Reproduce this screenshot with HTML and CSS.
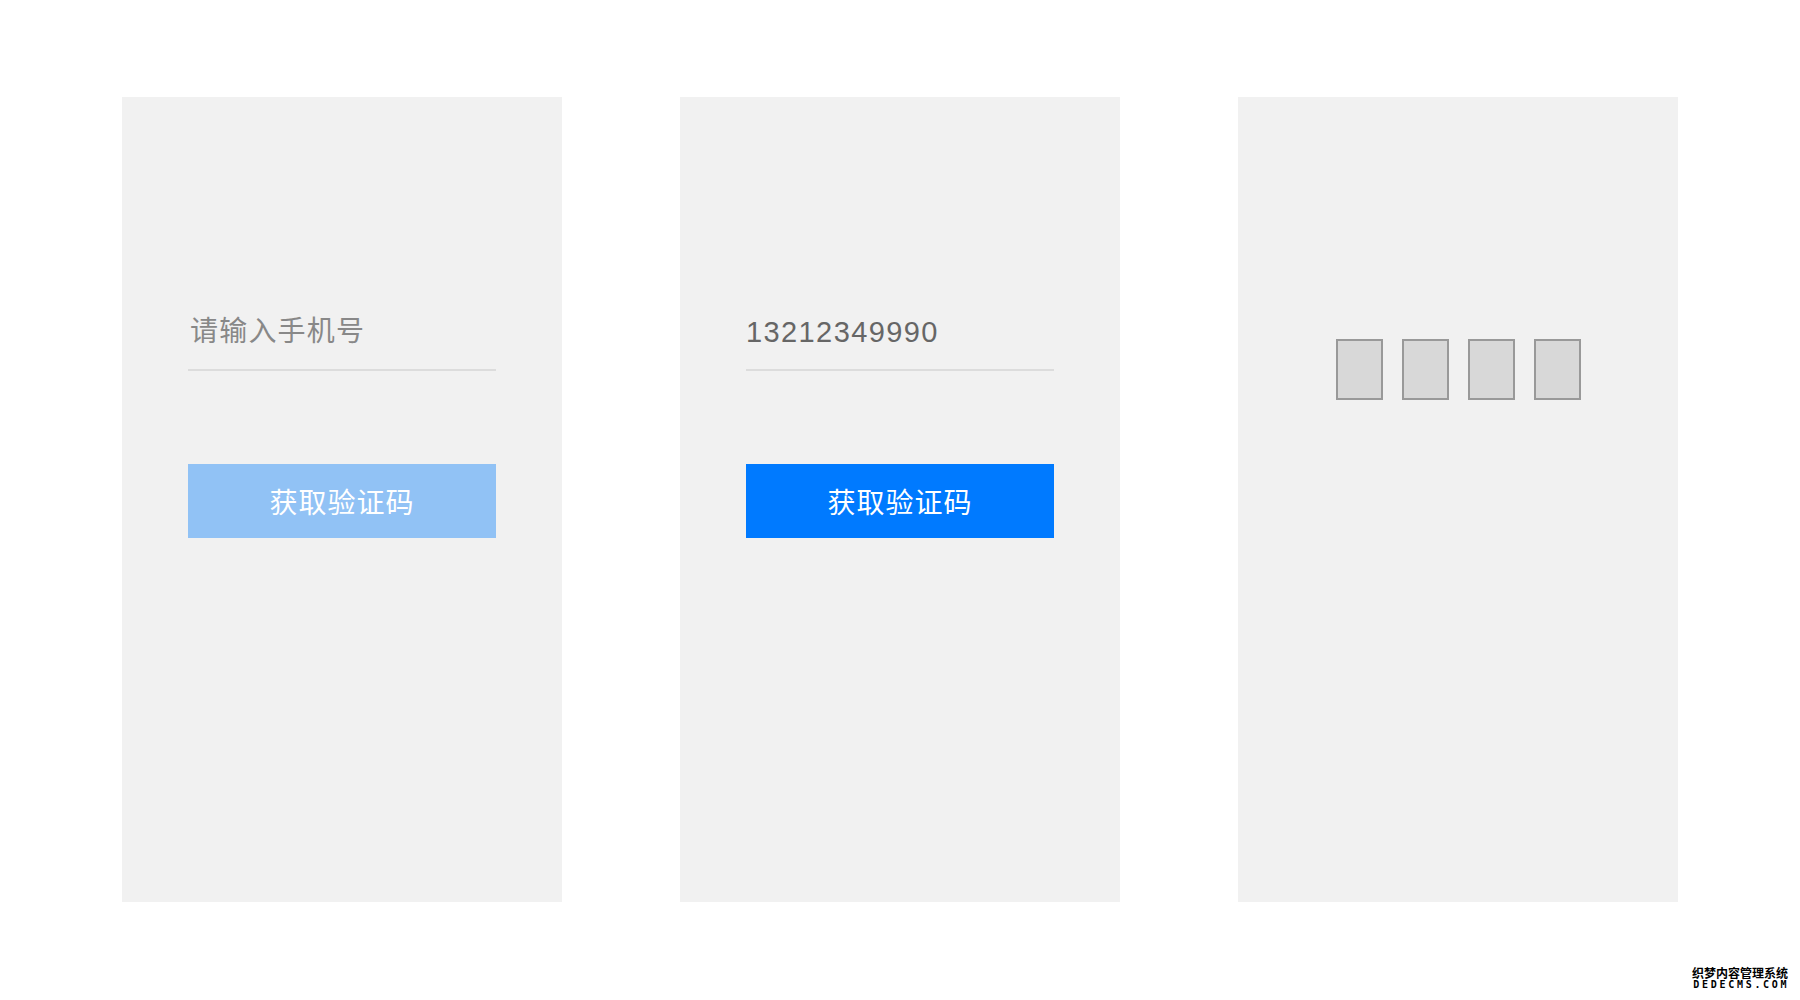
FILE: index.html
```html
<!DOCTYPE html>
<html lang="zh-CN">
<head>
    <meta charset="UTF-8">
    <meta name="viewport" content="width=device-width, initial-scale=1.0">
    <title>获取验证码</title>
    <link rel="stylesheet" href="styles.css">
</head>
<body>

    <div class="screens">
        <!-- step 1: empty phone number -->
        <div class="screen">
            <div class="field">
                <span class="placeholder">请输入手机号</span>
            </div>
            <button class="code-btn disabled" type="button">获取验证码</button>
        </div>

        <!-- step 2: number filled in -->
        <div class="screen">
            <div class="field">
                <span class="value">13212349990</span>
            </div>
            <button class="code-btn" type="button">获取验证码</button>
        </div>

        <!-- step 3: code boxes -->
        <div class="screen">
            <div class="code-boxes">
                <span class="code-box"></span>
                <span class="code-box"></span>
                <span class="code-box"></span>
                <span class="code-box"></span>
            </div>
        </div>
    </div>

    <div class="watermark">
        <div class="wm-cn">织梦内容管理系统</div>
        <div class="wm-en">DEDECMS.COM</div>
    </div>

</body>
</html>
```

FILE: styles.css
```css
body {
    margin: 0;
    background-color: #fff;
    font-family: 'Liberation Sans', 'Noto Sans CJK SC', sans-serif;
    height: 1000px;
    overflow: hidden;
}

.screens {
    display: flex;
    justify-content: center;
    gap: 118px;
    padding-top: 97px;
}

.screen {
    width: 440px;
    height: 805px;
    background-color: #f1f1f1;
    box-sizing: border-box;
    padding: 216px 66px 0;
}

.field {
    height: 38px;
    padding-bottom: 18px;
    border-bottom: 2px solid #dcdcdc;
    line-height: 38px;
}

.placeholder {
    font-size: 28px;
    letter-spacing: 1.2px;
    color: #888;
    padding-left: 2px;
}

.value {
    font-size: 29px;
    letter-spacing: 1.4px;
    color: #666;
}

.code-btn {
    display: block;
    width: 100%;
    height: 74px;
    margin-top: 93px;
    border: none;
    background-color: #007aff;
    color: #fff;
    font-family: 'Noto Sans CJK SC', sans-serif;
    font-size: 28px;
    letter-spacing: 1px;
    padding: 0;
}

.code-btn.disabled {
    background-color: #91c2f5;
}

.code-boxes {
    display: flex;
    justify-content: center;
    gap: 19px;
    margin-top: 26px;
}

.code-box {
    width: 47px;
    height: 61px;
    box-sizing: border-box;
    border: 2px solid #999;
    background-color: #d8d8d8;
}

.watermark {
    position: absolute;
    right: 12px;
    top: 966px;
    font-family: 'Noto Sans CJK SC', sans-serif;
    font-weight: bold;
    color: #000;
    text-shadow: 1px 0 #fff, -1px 0 #fff, 0 1px #fff, 0 -1px #fff;
    text-align: center;
}

.wm-cn {
    font-size: 12px;
    line-height: 14px;
}

.wm-en {
    font-family: 'DejaVu Sans Mono', monospace;
    font-size: 10px;
    line-height: 10px;
    letter-spacing: 2.7px;
    margin-right: -2.7px;
}
```
